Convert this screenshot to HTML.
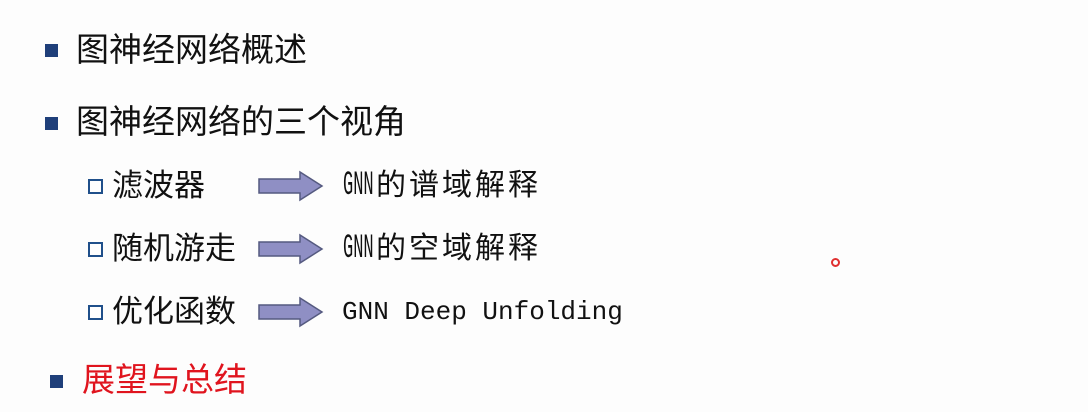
<!DOCTYPE html><html><head><meta charset="utf-8"><style>
body{margin:0;width:1088px;height:412px;background:#fdfdfd;position:relative;overflow:hidden;font-family:"Liberation Sans","Noto Sans CJK SC",sans-serif;color:#111}
.t{position:absolute;font-size:33px;line-height:40px;white-space:nowrap}
.s{position:absolute;font-size:31px;line-height:40px;white-space:nowrap}
.b{position:absolute;width:13px;height:13px;background:#1f3f7a}
.h{position:absolute;width:15px;height:15px;border:2px solid #1f4f8a;box-sizing:border-box}
.m{position:absolute;font-family:"Liberation Mono",monospace;font-size:26px;line-height:36px;white-space:nowrap}
.g{position:absolute;font-size:30px;line-height:36px;white-space:nowrap;letter-spacing:3px}
.n{display:inline-block;width:33px;height:36px;letter-spacing:0;font-family:"Liberation Mono",monospace;font-size:34px;line-height:36px;vertical-align:top}
.n span{display:inline-block;transform:scaleX(.5);transform-origin:0 0}
svg{position:absolute}
</style></head><body>
<div class="b" style="left:45px;top:44px"></div><div class="t" style="left:76px;top:30px">图神经网络概述</div>
<div class="b" style="left:45px;top:117px"></div><div class="t" style="left:76px;top:102px">图神经网络的三个视角</div>
<div class="h" style="left:88px;top:179px"></div><div class="s" style="left:112px;top:166px">滤波器</div>
<div class="h" style="left:88px;top:242px"></div><div class="s" style="left:112px;top:229px">随机游走</div>
<div class="h" style="left:88px;top:305px"></div><div class="s" style="left:112px;top:292px">优化函数</div>
<svg style="left:256px;top:170px" width="70" height="32"><path d="M3 9H44V2L66 16L44 30V23H3Z" fill="#8f8fc4" stroke="#555a80" stroke-width="1.5"/></svg>
<svg style="left:256px;top:233px" width="70" height="32"><path d="M3 9H44V2L66 16L44 30V23H3Z" fill="#8f8fc4" stroke="#555a80" stroke-width="1.5"/></svg>
<svg style="left:256px;top:296px" width="70" height="32"><path d="M3 9H44V2L66 16L44 30V23H3Z" fill="#8f8fc4" stroke="#555a80" stroke-width="1.5"/></svg>
<div class="g" style="left:343px;top:168px"><span class="n"><span>GNN</span></span>的谱域解释</div>
<div class="g" style="left:343px;top:231px"><span class="n"><span>GNN</span></span>的空域解释</div>
<div class="m" style="left:342px;top:294px">GNN Deep Unfolding</div>
<div class="b" style="left:50px;top:375px"></div><div class="t" style="left:82px;top:360px;color:#e0141e">展望与总结</div>
<div style="position:absolute;left:831px;top:258px;width:5px;height:5px;border:2px solid #e03030;border-radius:50%"></div>
</body></html>
